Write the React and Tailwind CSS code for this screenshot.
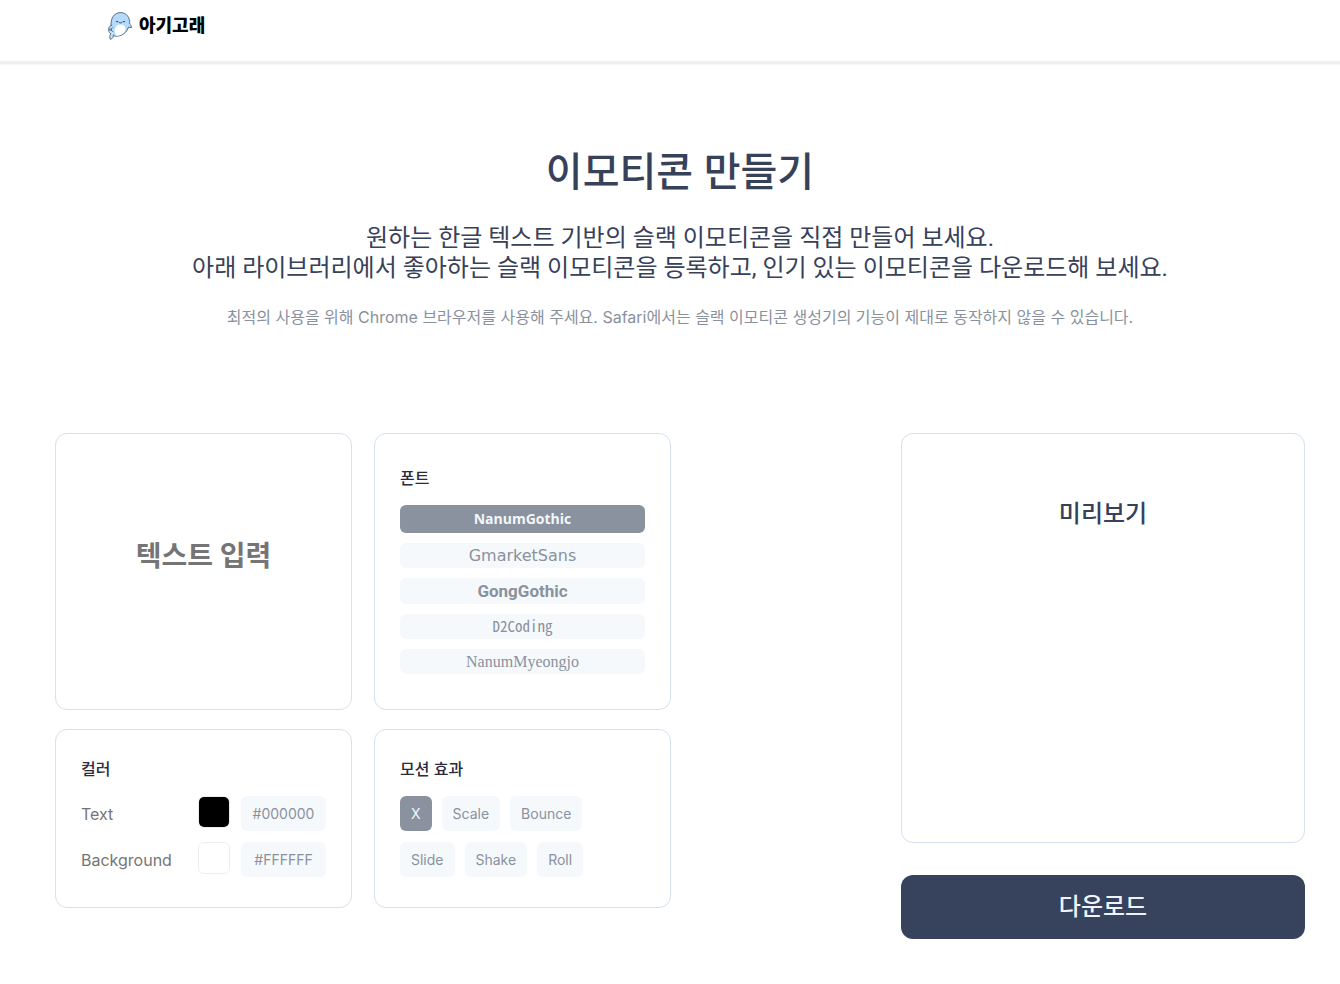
import React, { useState } from "react";

const fonts = [
  { name: "NanumGothic", className: "h-7 text-[14px] leading-6 font-bold font-['Open_Sans',sans-serif]" },
  { name: "GmarketSans", className: "h-[25px] text-[16px] leading-5 font-['DejaVu_Sans',sans-serif]" },
  { name: "GongGothic", className: "h-[26px] text-[17px] leading-5 font-bold font-['Roboto',sans-serif]" },
  { name: "D2Coding", className: "h-[25px] pb-[2px] text-[15px] leading-5 font-['Noto_Sans_Mono_CJK_KR','Liberation_Mono',monospace]" },
  { name: "NanumMyeongjo", className: "h-[25px] text-[16px] leading-5 font-['Liberation_Serif',serif]" },
];

const motions = ["X", "Scale", "Bounce", "Slide", "Shake", "Roll"];

function Whale() {
  return (
    <svg viewBox="0 0 24 28" className="w-6 h-7" fill="none" stroke="#4b6178" strokeWidth="0.9" strokeLinecap="round" strokeLinejoin="round" aria-hidden="true">
      <path d="M3 14.500C2.400 6 6.200.6 12.500.6c6.100 0 9.500 4.900 9.200 11.400 1.100.9 1.900 2.100 1.800 3.500-1.100.3-2.100.1-3-.5C19 20.500 14 24.400 7.800 24.200c-1.500-.1-2.800-.6-3.600-1.600z" fill="#b5dafa" />
      <path d="M6.800 19.200c-.6-4 2.300-6.900 6-6.800 3.300.1 5 2.200 4.600 5.100-.6 3.800-4.700 6.400-9.200 6.300-.8-1.200-1.200-2.900-1.400-4.600z" fill="#fff" stroke="none" />
      <path d="M3.800 13.200C2 13.600.6 15.400.6 17.400c1.500.2 3-.4 4-1.700" fill="#b5dafa" />
      <path d="M4.800 19.600C3.600 18 2 17.600.7 18.200c-.1 1.700.8 3 2.200 3.500-1.300 1.500-1.500 3.700-.5 5.700 2-.5 3.200-2.300 3-4.400" fill="#c5e3fb" />
      <path d="M8.300 9.600h1.400M15.300 9.600h1.400M11 10.300c.8.9 2.200.9 3 0" stroke="#26384d" />
    </svg>
  );
}

function App() {
  const [text, setText] = useState("");
  const [font, setFont] = useState("NanumGothic");
  const [motion, setMotion] = useState("X");
  const [colors, setColors] = useState({ Text: "#000000", Background: "#ffffff" });

  const handleColor = (e) => {
    const { name, value } = e.target;
    setColors((prev) => ({ ...prev, [name]: value }));
  };

  return (
    <div className="min-h-screen bg-white text-[#37415a] font-['Inter','Noto_Sans_CJK_KR',sans-serif]">
      <header className="h-16 border-b-3 border-[#efefef] pl-[108px] pt-3 shadow-[0_1px_1px_#f7f7f7]">
        <a href="#" className="inline-flex items-center gap-[7px] text-black">
          <Whale />
          <span className="text-[18px] leading-7 font-black">아기고래</span>
        </a>
      </header>

      <main className="pl-[55px] pr-[35px] pb-11">
        <section className="pt-[78px] text-center">
          <h1 className="text-[40px] leading-[60px] font-medium">이모티콘 만들기</h1>
          <p className="mt-[21px] text-[24px] leading-[30px] font-['Roboto','Noto_Sans_CJK_KR',sans-serif]">
            원하는 한글 텍스트 기반의 슬랙 이모티콘을 직접 만들어 보세요.
            <br />
            아래 라이브러리에서 좋아하는 슬랙 이모티콘을 등록하고, 인기 있는 이모티콘을 다운로드해 보세요.
          </p>
          <p className="mt-[22px] text-[16px] leading-6 text-[#8a919e]">
            최적의 사용을 위해 Chrome 브라우저를 사용해 주세요. Safari에서는 슬랙 이모티콘 생성기의 기능이 제대로 동작하지 않을 수 있습니다.
          </p>
        </section>

        <div className="mt-[104px] grid grid-cols-[616fr_404fr] items-start gap-[230px]">
          <div className="grid grid-cols-2 gap-x-[22px] gap-y-[19px]">
            <div className="flex items-center rounded-xl border border-[#d6e0ee] px-6 pb-8">
              <input
                type="text"
                aria-label="텍스트 입력"
                placeholder="텍스트 입력"
                value={text}
                onChange={(e) => setText(e.target.value)}
                className="w-full text-center text-[28px] leading-10 font-bold text-black outline-none placeholder:text-[#757575]"
              />
            </div>

            <div className="rounded-xl border border-[#d6e0ee] px-[25px] pt-8 pb-[35px]">
              <h2 className="text-[16px] leading-6 font-medium text-[#2b2b3d]">폰트</h2>
              <div className="mt-[15px] flex flex-col gap-[10px]">
                {fonts.map((f) => (
                  <button
                    key={f.name}
                    type="button"
                    onClick={() => setFont(f.name)}
                    className={`rounded-md ${f.className} ${font === f.name ? "bg-[#8a919f] text-[#f3f7fb]" : "bg-[#f5f9fc] text-[#8a919e]"}`}
                  >
                    {f.name}
                  </button>
                ))}
              </div>
            </div>

            <div className="rounded-xl border border-[#d6e0ee] px-[25px] pt-[27px] pb-[30px]">
              <h2 className="text-[16px] leading-6 font-medium text-[#2b2b3d]">컬러</h2>
              <div className="mt-[15px] flex flex-col gap-[11px]">
                {Object.keys(colors).map((name) => (
                  <div key={name} className="flex items-center">
                    <label htmlFor={name} className="flex-1 text-[16px] leading-6 text-[#757575]">
                      {name}
                    </label>
                    <input
                      id={name}
                      type="color"
                      name={name}
                      value={colors[name]}
                      onChange={handleColor}
                      className="size-8 mr-[11px] mb-[3px] appearance-none overflow-hidden rounded-md border border-[#ececf0] [&::-webkit-color-swatch-wrapper]:p-0 [&::-webkit-color-swatch]:border-0"
                    />
                    <span className="w-[85px] rounded-md bg-[#f5f9fc] text-center text-[14px] leading-[35px] text-[#8a919e]">
                      {colors[name].toUpperCase()}
                    </span>
                  </div>
                ))}
              </div>
            </div>

            <div className="rounded-xl border border-[#d6e0ee] px-[25px] pt-[27px] pb-[30px]">
              <h2 className="text-[16px] leading-6 font-medium text-[#2b2b3d]">모션 효과</h2>
              <div className="mt-[15px] mr-12 flex flex-wrap gap-x-[10px] gap-y-[11px]">
                {motions.map((m) => (
                  <button
                    key={m}
                    type="button"
                    onClick={() => setMotion(m)}
                    className={`rounded-md px-[11px] text-[14px] leading-[35px] ${motion === m ? "bg-[#8a919f] text-[#f3f7fb]" : "bg-[#f5f9fc] text-[#8a919e]"}`}
                  >
                    {m}
                  </button>
                ))}
              </div>
            </div>
          </div>

          <div>
            <div className="min-h-[410px] rounded-xl border border-[#d6e0ee] pt-[62px] text-center">
              <h2 className="text-[24px] leading-9 font-medium">미리보기</h2>
            </div>
            <button type="button" className="mt-8 h-16 w-full rounded-xl bg-[#37435d] text-[24px] font-medium text-[#f0f4f9]">
              다운로드
            </button>
          </div>
        </div>
      </main>
    </div>
  );
}

export default App;
